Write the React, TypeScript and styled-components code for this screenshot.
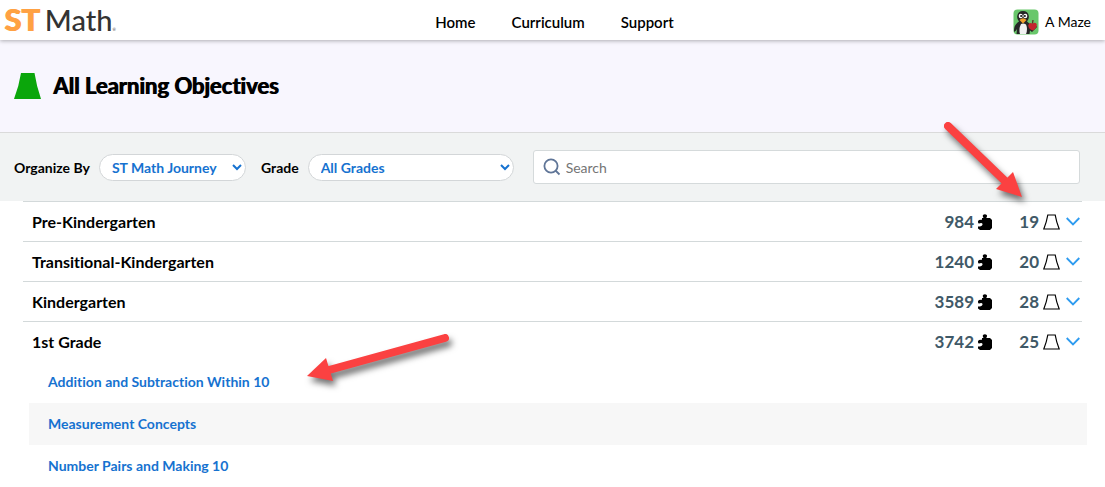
import React, { useState } from "react";
import styled, { createGlobalStyle } from "styled-components";

const GlobalStyle = createGlobalStyle`
  *, *::before, *::after { box-sizing: border-box; }
  body {
    margin: 0;
    background: #fff;
    color: #000;
    font-family: Lato, "Liberation Sans", sans-serif;
    font-size: 14px;
    font-variant-ligatures: none;
  }
  button, input, select { font: inherit; }
`;

const Page = styled.div`
  position: relative;
  overflow: hidden;
`;

const Header = styled.header`
  position: relative;
  display: grid;
  grid-template-columns: 1fr auto 1fr;
  grid-template-rows: 40px;
  align-items: center;
  padding: 0 14px;
  background: #fff;
  box-shadow: 0 1px 4px rgba(0, 0, 0, 0.3);
`;

const Logo = styled.a`
  display: flex;
  align-items: baseline;
  gap: 5px;
  justify-self: start;
  height: 40px;
  margin-left: -10px;
  color: #333;
  font-size: 29px;
  font-weight: 500;
  line-height: 38px;
  text-decoration: none;
`;

const LogoMark = styled.span`
  color: #ffa143;
  font-size: 31px;
  font-weight: 900;
  text-shadow: 1px 0 0 #ffa143;
`;

const Registered = styled.small`
  font-size: 4px;
  line-height: 4px;
`;

const Nav = styled.nav`
  display: flex;
  gap: 36px;
  padding: 4px 0 0 4px;
`;

const NavLink = styled.a`
  color: #000;
  font-size: 15px;
  font-weight: 600;
  line-height: 20px;
  text-decoration: none;
`;

const Account = styled.button`
  display: flex;
  align-items: center;
  justify-self: end;
  gap: 6px;
  padding: 3px 0 0;
  border: 0;
  background: none;
  color: #000;
`;

const TitleBar = styled.div`
  display: flex;
  align-items: center;
  gap: 11px;
  height: 93px;
  padding: 0 14px;
  background: #f8f6fe;
  border-bottom: 1px solid #dadada;
`;

const Title = styled.h1`
  margin: 0;
  font-size: 22px;
  font-weight: 700;
  line-height: 28px;
  text-shadow: 1px 0 0 #000;
`;

const Filters = styled.form`
  display: flex;
  align-items: center;
  height: 68px;
  padding: 0 25px 0 14px;
  background: #f1f3f3;
`;

const Label = styled.label`
  font-weight: 700;
  margin-right: 9px;
`;

const Select = styled.select<{ $width: number; $gap: number }>`
  width: ${(p) => p.$width}px;
  height: 27px;
  margin-right: ${(p) => p.$gap}px;
  padding: 0 0 0 8px;
  border: 1px solid #d3d6d8;
  border-radius: 14px;
  background-color: #fff;
  color: #1672d0;
  font-weight: 700;
`;

const SearchBox = styled.label`
  display: flex;
  flex: 1;
  align-items: center;
  gap: 5px;
  height: 34px;
  padding: 0 9px;
  background: #fff;
  border: 1px solid #d5dadb;
  border-radius: 3px;
`;

const SearchInput = styled.input`
  flex: 1;
  min-width: 0;
  padding: 0;
  border: 0;
  outline: 0;
  background: none;
  &::placeholder { color: #757575; }
`;

const Grades = styled.main`
  padding: 0 23px;
`;

const GradeRow = styled.button`
  display: flex;
  align-items: center;
  width: 100%;
  height: 40px;
  padding: 0 2px 0 9px;
  border: 0;
  border-top: 1px solid #d3d9da;
  background: none;
  color: #000;
  font-size: 16px;
  font-weight: 700;
  line-height: 20px;
  text-align: left;
`;

const GradeName = styled.span`
  flex: 1;
`;

const Count = styled.span<{ $width: number }>`
  display: flex;
  align-items: center;
  justify-content: flex-end;
  gap: 4px;
  width: ${(p) => p.$width}px;
  color: #3f5967;
  font-size: 17px;
  font-weight: 700;
`;

const Chevron = styled.svg`
  margin-left: 6px;
`;

const Objectives = styled.ul`
  margin: 0 -5px 0 6px;
  padding: 0;
  list-style: none;
`;

const Objective = styled.li`
  height: 42px;
  padding: 0 19px;
  line-height: 42px;
  &:nth-child(even) { background: #f7f7f7; }
`;

const ObjectiveLink = styled.a`
  color: #1672d0;
  font-weight: 700;
  text-decoration: none;
`;

const Pointer = styled.svg<{ $side: "left" | "right"; $offset: number; $top: number }>`
  position: absolute;
  top: ${(p) => p.$top}px;
  ${(p) => p.$side}: ${(p) => p.$offset}px;
  overflow: visible;
  pointer-events: none;
  filter: drop-shadow(3px 5px 3px rgba(0, 0, 0, 0.55));
`;

const PenguinAvatar = () => (
  <svg width="26" height="26" viewBox="0 0 26 26" aria-hidden="true">
    <rect width="25" height="25" x="0.5" y="0.5" rx="4" fill="#69c76b" />
    <path d="M1 23C1 18 2 15 6 12.5Q3.8 10 4.2 7Q5 2 10 2Q15 2 15.8 7Q16.2 10 14 12.5Q17 14.5 18 17L22 15.5 24 18 19 23 17 21.5 16.5 25H3.5L4 20Q3 22 1 23Z" fill="#262626" />
    <path d="M8 15Q10.5 14 13 15.5Q15 20 13 25H7Q5.5 20 8 15Z" fill="#f2f2f2" />
    <ellipse cx="7.7" cy="7" rx="2" ry="2.3" fill="#fff" />
    <ellipse cx="12.3" cy="7" rx="2" ry="2.3" fill="#fff" />
    <circle cx="8.1" cy="7" r="1" fill="#111" />
    <circle cx="11.9" cy="7" r="1" fill="#111" />
    <path d="M6.5 11Q10 7.5 13.5 11L10 14.5Z" fill="#f2a12c" />
    <path d="M19.5 14.5Q23 12.5 23.8 15.5Q24 19 20 21.5Q15.5 20.5 15.2 16.5Q16 13 19.5 14.5Z" fill="#c4242e" />
    <path d="M19.5 14.5L20 11" stroke="#593126" strokeWidth="1.3" />
  </svg>
);

const PuzzleIcon = () => (
  <svg width="15" height="16" viewBox="0 0 15 16" aria-hidden="true">
    <path d="M4 4H5.6Q4.4 2.4 5 1Q6.9-.6 8.8 1Q9.4 2.4 8.2 4H12L14 6V14L12 16H2L0 14.4V12.4Q2.6 13 4 11.6Q5 10.2 4 9.2Q2.8 8.6 1 9.6Q-.2 9.2 0 7.2Q.3 5.6 4 5.8Z" />
  </svg>
);

const FlaskIcon = () => (
  <svg width="17" height="16" viewBox="0 0 17 16" fill="none" stroke="#000" strokeWidth="1.2" aria-hidden="true">
    <path d="M4.8 1H12.2Q13.4 8 16.2 15H.8Q3.6 8 4.8 1Z" />
  </svg>
);

const grades = [
  { name: "Pre-Kindergarten", puzzles: 984, objectives: 19, items: [] },
  { name: "Transitional-Kindergarten", puzzles: 1240, objectives: 20, items: [] },
  { name: "Kindergarten", puzzles: 3589, objectives: 28, items: [] },
  {
    name: "1st Grade",
    puzzles: 3742,
    objectives: 25,
    items: ["Addition and Subtraction Within 10", "Measurement Concepts", "Number Pairs and Making 10"],
  },
];

export default function App() {
  const [open, setOpen] = useState("1st Grade");
  return (
    <Page>
      <GlobalStyle />
      <Header>
        <Logo href="#">
          <LogoMark>ST</LogoMark>
          <span>Math<Registered>®</Registered></span>
        </Logo>
        <Nav>
          <NavLink href="#home">Home</NavLink>
          <NavLink href="#curriculum">Curriculum</NavLink>
          <NavLink href="#support">Support</NavLink>
        </Nav>
        <Account type="button"><PenguinAvatar />A Maze</Account>
      </Header>
      <TitleBar>
        <svg width="28" height="27" viewBox="0 0 28 27" aria-hidden="true">
          <path d="M7 0H20.5Q22.5 13 27 26H0Q5 13 7 0Z" fill="#0ba60b" />
        </svg>
        <Title>All Learning Objectives</Title>
      </TitleBar>
      <Filters onSubmit={(e) => e.preventDefault()}>
        <Label htmlFor="organize">Organize By</Label>
        <Select id="organize" $width={147} $gap={15}><option>ST Math Journey</option></Select>
        <Label htmlFor="grade">Grade</Label>
        <Select id="grade" $width={206} $gap={19}><option>All Grades</option></Select>
        <SearchBox>
          <svg width="18" height="18" viewBox="0 0 18 18" fill="none" stroke="#5f7597" strokeWidth="1.8" aria-hidden="true">
            <circle cx="8" cy="8" r="6.6" />
            <path d="M12.5 12.5L16.5 16.5" />
          </svg>
          <SearchInput type="text" placeholder="Search" aria-label="Search" />
        </SearchBox>
      </Filters>
      <Grades>
        {grades.map((g) => (
          <section key={g.name}>
            <GradeRow type="button" aria-expanded={open === g.name} onClick={() => setOpen(open === g.name ? "" : g.name)}>
              <GradeName>{g.name}</GradeName>
              <Count $width={90}>{g.puzzles}<PuzzleIcon /></Count>
              <Count $width={67}>{g.objectives}<FlaskIcon /></Count>
              <Chevron width="14" height="9" viewBox="0 0 14 9" fill="none" stroke="#2d9bf0" strokeWidth="1.8" aria-hidden="true">
                <path d="M.7 1L7 7.5L13.3 1" />
              </Chevron>
            </GradeRow>
            {open === g.name && g.items.length > 0 && (
              <Objectives>
                {g.items.map((item) => (
                  <Objective key={item}><ObjectiveLink href="#objective">{item}</ObjectiveLink></Objective>
                ))}
              </Objectives>
            )}
          </section>
        ))}
      </Grades>
      <Pointer $side="right" $offset={83} $top={121} width="79" height="77" viewBox="0 0 79 77" aria-hidden="true">
        <path d="M5 5L62 60" stroke="#fb4141" strokeWidth="8" strokeLinecap="round" />
        <path d="M70 51L79 76L53 68Z" fill="#fb4141" />
      </Pointer>
      <Pointer $side="left" $offset={307} $top={333} width="143" height="50" viewBox="0 0 143 50" aria-hidden="true">
        <path d="M138 5L22 37" stroke="#fb4141" strokeWidth="8" strokeLinecap="round" />
        <path d="M19 25L0 43L26 48Z" fill="#fb4141" />
      </Pointer>
    </Page>
  );
}
